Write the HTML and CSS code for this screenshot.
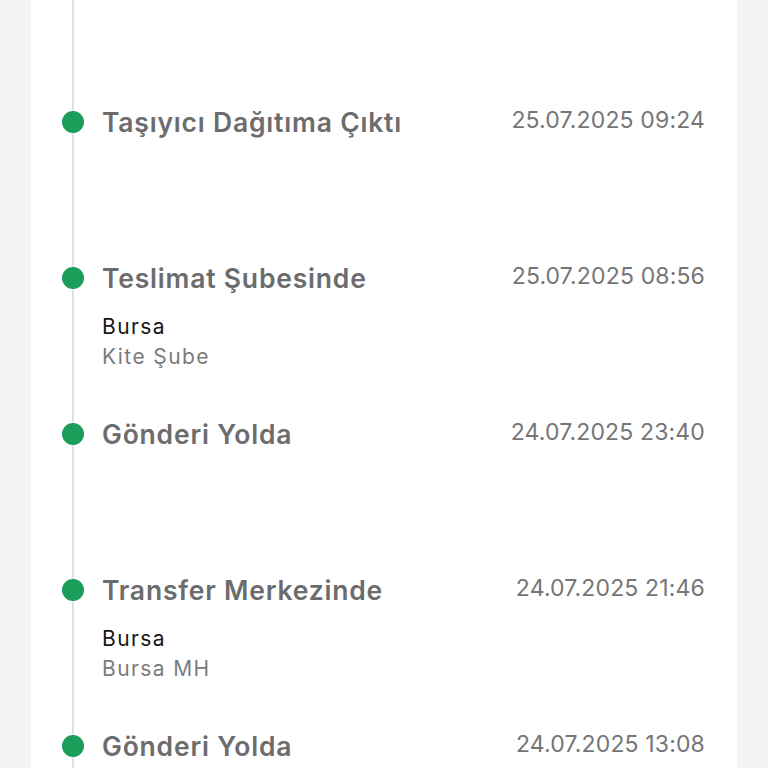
FILE: index.html
```html
<!DOCTYPE html>
<html>
<head>
	<meta charset="utf-8" />
	<meta name="viewport" content="width=device-width, initial-scale=1.0" />
	<title>Kargo Takip</title>
	<link rel="stylesheet" href="styles.css">
</head>
<body>
	<div class="card">
		<ul class="timeline">
			<li class="step">
				<span class="dot"></span>
				<div class="head">
					<p class="title">Taşıyıcı Dağıtıma Çıktı</p>
					<p class="date">25.07.2025 09:24</p>
				</div>
			</li>
			<li class="step">
				<span class="dot"></span>
				<div class="head">
					<p class="title">Teslimat Şubesinde</p>
					<p class="date">25.07.2025 08:56</p>
				</div>
				<p class="city">Bursa</p>
				<p class="branch">Kite Şube</p>
			</li>
			<li class="step">
				<span class="dot"></span>
				<div class="head">
					<p class="title">Gönderi Yolda</p>
					<p class="date">24.07.2025 23:40</p>
				</div>
			</li>
			<li class="step">
				<span class="dot"></span>
				<div class="head">
					<p class="title">Transfer Merkezinde</p>
					<p class="date">24.07.2025 21:46</p>
				</div>
				<p class="city">Bursa</p>
				<p class="branch">Bursa MH</p>
			</li>
			<li class="step">
				<span class="dot"></span>
				<div class="head">
					<p class="title">Gönderi Yolda</p>
					<p class="date">24.07.2025 13:08</p>
				</div>
			</li>
		</ul>
	</div>
</body>
</html>
```

FILE: styles.css
```css
*{
	margin: 0;
	padding: 0;
	box-sizing: border-box;
}
html, body{
	height: 100%;
	overflow: hidden;
}
body{
	background: #f3f4f6;
	font-family: Inter, "Noto Sans", sans-serif;
}
.card{
	margin: 0 31px;
	min-height: 100%;
	background: #ffffff;
	padding: 0 32px 0 41px;
}
.timeline{
	list-style: none;
	border-left: 2px solid #e0e0e2;
	padding-top: 107px;
}
.step{
	position: relative;
	height: 156px;
	padding-left: 28px;
}
.dot{
	position: absolute;
	left: -12px;
	top: 4px;
	width: 22px;
	height: 22px;
	border-radius: 50%;
	background: #1a9e5a;
}
.head{
	display: flex;
	justify-content: space-between;
	align-items: flex-start;
	height: 30px;
}
.title{
	font-size: 26.5px;
	line-height: 30px;
	font-weight: 600;
	letter-spacing: 0.8px;
	color: #6c6c6e;
}
.date{
	font-size: 23px;
	line-height: 26px;
	letter-spacing: 0.15px;
	color: #757577;
}
.city{
	margin-top: 19px;
	font-size: 21px;
	line-height: 30px;
	letter-spacing: 1.4px;
	color: #161616;
}
.branch{
	font-size: 21px;
	line-height: 30px;
	letter-spacing: 1.4px;
	color: #7b7b7d;
}
```
